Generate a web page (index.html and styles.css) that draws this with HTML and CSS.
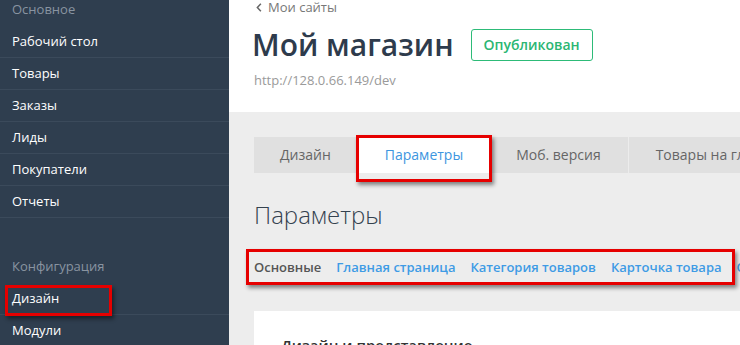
FILE: index.html
```html
<!DOCTYPE html>
<html lang="ru">
<head>
    <meta charset="UTF-8">
    <title>Мой магазин - Параметры</title>
    <link rel="stylesheet" href="styles.css">
</head>
<body>
    <!-- боковое меню -->
    <aside class="sidebar">
        <div class="side-title">Основное</div>
        <a class="side-item" href="#">Рабочий стол</a>
        <a class="side-item" href="#">Товары</a>
        <a class="side-item" href="#">Заказы</a>
        <a class="side-item" href="#">Лиды</a>
        <a class="side-item" href="#">Покупатели</a>
        <a class="side-item" href="#">Отчеты</a>

        <div class="side-title side-title-gap">Конфигурация</div>
        <a class="side-item marked" href="#">Дизайн<span class="mark mark-side"></span></a>
        <a class="side-item" href="#">Модули</a>
    </aside>

    <main class="main">
        <header class="site-head">
            <a class="back-link" href="#">
                <svg class="back-icon" viewBox="0 0 8 12" width="6" height="9">
                    <path d="M6.5 1L1.8 6l4.7 5" fill="none" stroke="currentColor" stroke-width="2"/>
                </svg>
                Мои сайты
            </a>
            <div class="title-row">
                <h1>Мой магазин</h1>
                <span class="status">Опубликован</span>
            </div>
            <div class="site-url">http://128.0.66.149/dev</div>
        </header>

        <section class="content">
            <nav class="tabs">
                <a class="tab" href="#">Дизайн</a>
                <a class="tab active" href="#">Параметры<span class="mark mark-tab"></span></a>
                <a class="tab" href="#">Моб. версия</a>
                <a class="tab" href="#">Товары на главной</a>
            </nav>

            <h2 class="page-title">Параметры</h2>

            <nav class="subnav">
                <span class="sub-item current">Основные</span>
                <a class="sub-item" href="#">Главная страница</a>
                <a class="sub-item" href="#">Категория товаров</a>
                <a class="sub-item" href="#">Карточка товара</a>
                <a class="sub-item" href="#">Оформление заказа</a>
                <span class="mark mark-sub"></span>
            </nav>

            <div class="card">
                <h3>Дизайн и представление</h3>
            </div>
        </section>
    </main>
</body>
</html>
```

FILE: styles.css
```css
* {
    margin: 0;
    padding: 0;
    box-sizing: border-box;
}

body {
    font-family: "Open Sans", "Noto Sans", sans-serif;
    font-size: 13px;
    display: flex;
    width: 740px;
    height: 345px;
    overflow: hidden;
    background: #ededed;
}

a {
    text-decoration: none;
}

/* боковое меню */
.sidebar {
    width: 229px;
    flex-shrink: 0;
    background: #2f3e4f;
    display: flex;
    flex-direction: column;
}

.side-title {
    color: #8994a1;
    font-size: 13px;
    line-height: 18px;
    padding: 0 12px 8px;
}

.side-title-gap {
    padding-top: 39px;
}

.side-item {
    position: relative;
    display: block;
    height: 32px;
    line-height: 31px;
    padding: 0 12px;
    color: #fff;
    border-bottom: 1px solid #3b4a5b;
    flex-shrink: 0;
}

/* красные рамки-пометки */
.mark {
    position: absolute;
    border: 3px solid #e60000;
    box-shadow: 2px 3px 4px rgba(0,0,0,0.45);
    pointer-events: none;
}

.mark-side {
    left: 5px;
    top: 2px;
    width: 107px;
    height: 31px;
}

.mark-tab {
    left: -1px;
    top: -2px;
    right: -3px;
    bottom: -9px;
}

.mark-sub {
    left: -8px;
    top: 0;
    width: 489px;
    height: 36px;
}

/* основная часть */
.main {
    flex: 1;
    display: flex;
    flex-direction: column;
    min-width: 0;
}

.site-head {
    background: #fff;
    height: 112px;
    flex-shrink: 0;
    padding: 0 25px;
}

.back-link {
    display: flex;
    align-items: center;
    gap: 6px;
    color: #777;
    font-size: 13px;
    line-height: 14px;
    padding-left: 2px;
}

.back-icon {
    color: #666;
}

.title-row {
    display: flex;
    align-items: center;
    gap: 17px;
    margin-top: 15px;
}

h1 {
    font-size: 30px;
    font-weight: 600;
    color: #2e3b4c;
    line-height: 32px;
    margin-left: -2px;
}

.status {
    border: 1px solid #2dbb78;
    border-radius: 3px;
    color: #2bb673;
    font-size: 14px;
    font-weight: 600;
    height: 32px;
    line-height: 30px;
    padding: 0 12px;
}

.site-url {
    color: #9a9a9a;
    font-size: 13px;
    margin-top: 10px;
}

.content {
    flex: 1;
    padding: 25px 0 0 25px;
}

.tabs {
    display: flex;
    height: 36px;
    background: #e0e0e0;
    white-space: nowrap;
}

.tab {
    position: relative;
    padding: 0 27px;
    line-height: 36px;
    font-size: 14px;
    color: #666;
    border-right: 1px solid #ececec;
}

.tab:first-child {
    border-right: none;
    padding: 0 26px;
}

.tab.active {
    background: #fff;
    color: #3d96e0;
    padding: 0 26px 0 28px;
    border-right: none;
}

.page-title {
    font-size: 24px;
    font-weight: 300;
    color: #34424f;
    margin-top: 24px;
    line-height: 36px;
}

.subnav {
    position: relative;
    display: flex;
    gap: 15px;
    align-items: center;
    height: 36px;
    margin-top: 16px;
    white-space: nowrap;
}

.sub-item {
    font-size: 13px;
    font-weight: 600;
    color: #3e9be5;
}

.sub-item.current {
    color: #555;
}

.card {
    background: #fff;
    margin-top: 26px;
    height: 60px;
    padding: 24px 27px;
}

.card h3 {
    font-size: 15px;
    font-weight: 600;
    color: #333;
}
```
